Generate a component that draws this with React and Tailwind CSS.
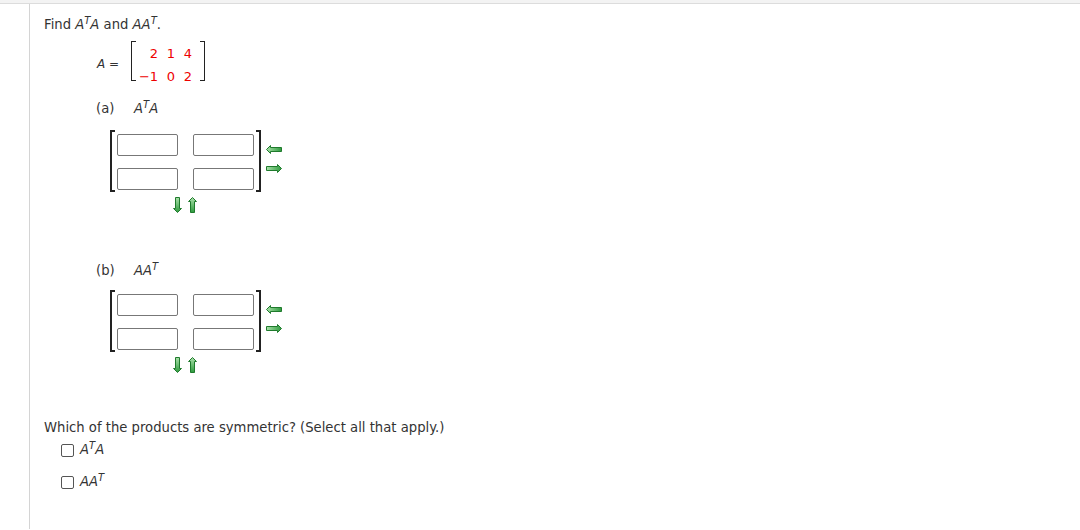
import React from "react";

const font = { fontFamily: "Verdana, 'DejaVu Sans', sans-serif" };

const ArrowLeft = () => (
  <svg width="16" height="9" viewBox="0 0 16 9">
    <defs>
      <linearGradient id="gl" x1="0" y1="0" x2="1" y2="0">
        <stop offset="0" stopColor="#a8e0a8" />
        <stop offset="1" stopColor="#2e9a3e" />
      </linearGradient>
    </defs>
    <path d="M0.5 4.5 L4.5 0.5 L4.5 2.5 L15.5 2.5 L15.5 6.5 L4.5 6.5 L4.5 8.5 Z" fill="url(#gl)" stroke="#1f7a2c" strokeWidth="1" />
  </svg>
);

const ArrowRight = () => (
  <svg width="16" height="9" viewBox="0 0 16 9">
    <defs>
      <linearGradient id="gr" x1="0" y1="0" x2="1" y2="0">
        <stop offset="0" stopColor="#a8e0a8" />
        <stop offset="1" stopColor="#2e9a3e" />
      </linearGradient>
    </defs>
    <path d="M15.5 4.5 L11.5 0.5 L11.5 2.5 L0.5 2.5 L0.5 6.5 L11.5 6.5 L11.5 8.5 Z" fill="url(#gr)" stroke="#1f7a2c" strokeWidth="1" />
  </svg>
);

const ArrowDown = () => (
  <svg width="9" height="16" viewBox="0 0 9 16">
    <defs>
      <linearGradient id="gd" x1="0" y1="0" x2="0" y2="1">
        <stop offset="0" stopColor="#a8e0a8" />
        <stop offset="1" stopColor="#2e9a3e" />
      </linearGradient>
    </defs>
    <path d="M4.5 15.5 L0.5 11.5 L2.5 11.5 L2.5 0.5 L6.5 0.5 L6.5 11.5 L8.5 11.5 Z" fill="url(#gd)" stroke="#1f7a2c" strokeWidth="1" />
  </svg>
);

const ArrowUp = () => (
  <svg width="9" height="16" viewBox="0 0 9 16">
    <defs>
      <linearGradient id="gu" x1="0" y1="0" x2="0" y2="1">
        <stop offset="0" stopColor="#a8e0a8" />
        <stop offset="1" stopColor="#2e9a3e" />
      </linearGradient>
    </defs>
    <path d="M4.5 0.5 L0.5 4.5 L2.5 4.5 L2.5 15.5 L6.5 15.5 L6.5 4.5 L8.5 4.5 Z" fill="url(#gu)" stroke="#1f7a2c" strokeWidth="1" />
  </svg>
);

const Box = () => (
  <input
    type="text"
    className="w-[61px] h-[22px] border border-[#777] rounded-[2px] bg-white outline-none"
  />
);

const AnswerMatrix = () => (
  <div className="ml-[66px]">
    <div className="flex items-start">
      <div className="flex">
        <div className="w-[5px] h-[62px] border-l-2 border-t-2 border-b-2 border-[#222]" />
        <div className="grid grid-cols-[61px_61px] gap-x-[15px] gap-y-[9px] pt-[4px] pl-[2px] pr-[2px]">
          <Box />
          <Box />
          <Box />
          <Box />
        </div>
        <div className="w-[5px] h-[62px] border-r-2 border-t-2 border-b-2 border-[#222]" />
      </div>
      <div className="flex flex-col gap-[10px] ml-[5px] mt-[15px]">
        <ArrowLeft />
        <ArrowRight />
      </div>
    </div>
    <div className="flex gap-[6px] ml-[63px] mt-[5px]">
      <ArrowDown />
      <ArrowUp />
    </div>
  </div>
);

// preflight puts sup at top:-0.5em; keep it, just size it
const Sup = ({ children }) => (
  <sup className="text-[10px] italic">{children}</sup>
);

export default function App() {
  return (
    <div className="w-[1080px] h-[530px] bg-white text-[#333] text-[13.2px] overflow-hidden" style={font}>
      <div className="h-[4px] bg-[#f3f3f3] border-b border-[#dcdcdc]" />
      <div className="flex h-[525px]">
        <div className="w-[30px] border-r border-[#d4d4d4]" />
        <div className="pl-[14px] pt-[12px] flex-1">
          <div className="leading-[18px]">
            Find <i>A</i><Sup>T</Sup><i>A</i> and <i>AA</i><Sup>T</Sup>.
          </div>

          {/* matrix A */}
          <div className="flex items-start ml-[53px] mt-[7px]">
            <span className="italic text-[12px] mr-[12px] mt-[14px] leading-[18px]">
              A <span className="not-italic">=</span>
            </span>
            <div className="w-[5px] h-[40px] border-l border-t border-b border-[#222]" />
            <div className="flex flex-col text-[#e00] text-[13px] leading-[23px] mt-[1px]">
              <div className="grid grid-cols-[22px_17px_17px] text-right">
                <span>2</span><span>1</span><span>4</span>
              </div>
              <div className="grid grid-cols-[22px_17px_17px] text-right">
                <span>−1</span><span>0</span><span>2</span>
              </div>
            </div>
            <div className="w-[8px]" />
            <div className="w-[5px] h-[40px] border-r border-t border-b border-[#222]" />
          </div>

          <div className="flex items-center ml-[52px] mt-[12px] leading-[18px]">
            <span className="w-[38px]">(a)</span>
            <span><i>A</i><Sup>T</Sup><i>A</i></span>
          </div>
          <div className="mt-[12px]">
            <AnswerMatrix />
          </div>

          <div className="flex items-center ml-[52px] mt-[49px] leading-[18px]">
            <span className="w-[38px]">(b)</span>
            <span><i>AA</i><Sup>T</Sup></span>
          </div>
          <div className="mt-[10px]">
            <AnswerMatrix />
          </div>

          <div className="mt-[46px] leading-[18px]">
            Which of the products are symmetric? (Select all that apply.)
          </div>
          <div className="ml-[17px] mt-[4px] flex flex-col gap-[14px]">
            <label className="flex items-center gap-[6px] leading-[18px]">
              <span className="w-[13px] h-[13px] border border-[#555] rounded-[2px] bg-white inline-block" />
              <span><i>A</i><Sup>T</Sup><i>A</i></span>
            </label>
            <label className="flex items-center gap-[6px] leading-[18px]">
              <span className="w-[13px] h-[13px] border border-[#555] rounded-[2px] bg-white inline-block" />
              <span><i>AA</i><Sup>T</Sup></span>
            </label>
          </div>
        </div>
      </div>
    </div>
  );
}
